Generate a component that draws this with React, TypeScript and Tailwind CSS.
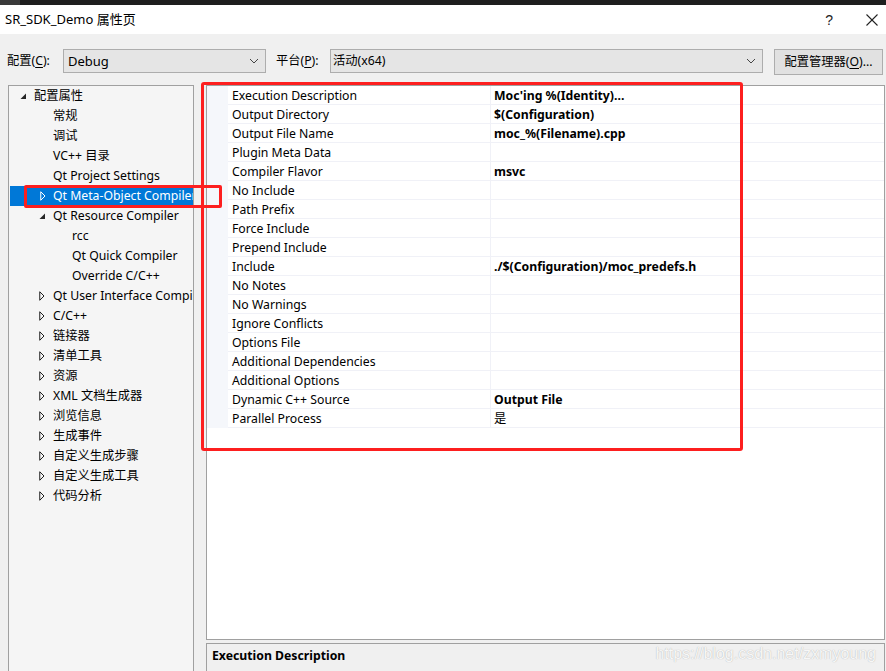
import React from "react";

type TreeItem = { label: string; level: number; arrow?: "open" | "closed"; selected?: boolean };

const tree: TreeItem[] = [
  { label: "配置属性", level: 0, arrow: "open" },
  { label: "常规", level: 1 },
  { label: "调试", level: 1 },
  { label: "VC++ 目录", level: 1 },
  { label: "Qt Project Settings", level: 1 },
  { label: "Qt Meta-Object Compiler", level: 1, arrow: "closed", selected: true },
  { label: "Qt Resource Compiler", level: 1, arrow: "open" },
  { label: "rcc", level: 2 },
  { label: "Qt Quick Compiler", level: 2 },
  { label: "Override C/C++", level: 2 },
  { label: "Qt User Interface Compiler", level: 1, arrow: "closed" },
  { label: "C/C++", level: 1, arrow: "closed" },
  { label: "链接器", level: 1, arrow: "closed" },
  { label: "清单工具", level: 1, arrow: "closed" },
  { label: "资源", level: 1, arrow: "closed" },
  { label: "XML 文档生成器", level: 1, arrow: "closed" },
  { label: "浏览信息", level: 1, arrow: "closed" },
  { label: "生成事件", level: 1, arrow: "closed" },
  { label: "自定义生成步骤", level: 1, arrow: "closed" },
  { label: "自定义生成工具", level: 1, arrow: "closed" },
  { label: "代码分析", level: 1, arrow: "closed" },
];

const rows: [string, string][] = [
  ["Execution Description", "Moc'ing %(Identity)..."],
  ["Output Directory", "$(Configuration)"],
  ["Output File Name", "moc_%(Filename).cpp"],
  ["Plugin Meta Data", ""],
  ["Compiler Flavor", "msvc"],
  ["No Include", ""],
  ["Path Prefix", ""],
  ["Force Include", ""],
  ["Prepend Include", ""],
  ["Include", "./$(Configuration)/moc_predefs.h"],
  ["No Notes", ""],
  ["No Warnings", ""],
  ["Ignore Conflicts", ""],
  ["Options File", ""],
  ["Additional Dependencies", ""],
  ["Additional Options", ""],
  ["Dynamic C++ Source", "Output File"],
  ["Parallel Process", "是"],
];

const levelPad = ["pl-[10px]", "pl-[29px]", "pl-[48px]"];

function Arrow({ kind, selected }: { kind?: "open" | "closed"; selected?: boolean }) {
  return (
    <span className="w-[15px] h-[20px] flex items-center shrink-0">
      {kind === "open" && (
        <svg width="7" height="7" viewBox="0 0 7 7" className="ml-[1px] mt-[1px]">
          <polygon points="6,0.5 6,6 0.5,6" fill="#262626" />
        </svg>
      )}
      {kind === "closed" && (
        <svg width="6" height="10" viewBox="0 0 6 10" className="ml-[1px]">
          <polygon
            points="0.75,0.75 5,5 0.75,9.25"
            fill="none"
            stroke={selected ? "#ffffff" : "#1e1e1e"}
            strokeWidth="1"
          />
        </svg>
      )}
    </span>
  );
}

function Chevron() {
  return (
    <svg width="10" height="6" viewBox="0 0 10 6">
      <polyline points="1,1 5,5 9,1" fill="none" stroke="#444" strokeWidth="1" />
    </svg>
  );
}

export default function App() {
  return (
    <div className="relative w-[886px] h-[671px] overflow-hidden bg-[#f0f0f0] flex flex-col font-['Noto_Sans','Noto_Sans_CJK_SC',sans-serif] text-[12.25px] text-black leading-none">
      {/* top dark strip */}
      <div className="h-[5px] bg-[#1e1e1e] shrink-0 flex">
        <div className="w-[20px] bg-[#3a3a3a]" />
      </div>

      {/* title bar */}
      <div className="h-[29px] bg-white shrink-0 flex items-center">
        <span className="ml-[5px] text-[13px]">SR_SDK_Demo 属性页</span>
        <span className="ml-auto text-[14px] text-[#222] mr-[33px] font-['Liberation_Sans',sans-serif]">?</span>
        <svg width="12" height="12" viewBox="0 0 12 12" className="mr-[8px]">
          <line x1="0.5" y1="0.5" x2="11.5" y2="11.5" stroke="#222" strokeWidth="1.1" />
          <line x1="11.5" y1="0.5" x2="0.5" y2="11.5" stroke="#222" strokeWidth="1.1" />
        </svg>
      </div>

      {/* toolbar */}
      <div className="h-[51px] shrink-0 flex items-start pt-[15px]">
        <span className="ml-[7px] w-[56px] h-[24px] flex items-center">
          配置(<span className="underline underline-offset-2">C</span>):
        </span>
        <div className="w-[203px] h-[24px] bg-[#e5e5e5] border border-[#adadad] flex items-center pl-[4px] pr-[6px]">
          <span className="text-[13px]">Debug</span>
          <span className="ml-auto flex"><Chevron /></span>
        </div>
        <span className="ml-[10px] w-[54px] h-[24px] flex items-center">
          平台(<span className="underline underline-offset-2">P</span>):
        </span>
        <div className="w-[433px] h-[24px] bg-[#e5e5e5] border border-[#adadad] flex items-center pl-[2px] pr-[6px]">
          <span>活动(x64)</span>
          <span className="ml-auto flex"><Chevron /></span>
        </div>
        <div className="ml-[11px] w-[109px] h-[26px] bg-[#e1e1e1] border border-[#adadad] flex items-center justify-center">
          配置管理器(<span className="underline underline-offset-2">O</span>)...
        </div>
      </div>

      {/* main */}
      <div className="flex-1 min-h-0 flex pl-[8px] gap-[12px]">
        {/* tree */}
        <div className="w-[186px] h-[600px] border border-[#a0a0a0] bg-[#f5f5f5] shrink-0 overflow-hidden">
          {tree.map((t, i) => (
            <div
              key={i}
              className={`h-[20px] flex items-center whitespace-nowrap overflow-hidden ${levelPad[t.level]} ${
                t.selected ? "bg-[#0078d7] text-white ml-[1px]" : ""
              }`}
            >
              <Arrow kind={t.arrow} selected={t.selected} />
              <span className={`pt-[1px] ${t.selected ? "-ml-[1px]" : ""}`}>{t.label}</span>
            </div>
          ))}
        </div>

        {/* right side */}
        <div className="w-[679px] shrink-0 flex flex-col gap-[3px]">
          <div className="h-[555px] border border-[#a0a0a0] bg-white shrink-0 overflow-hidden">
            {rows.map(([name, value], i) => (
              <div key={i} className="h-[19px] flex">
                <div className="w-[21px] bg-[#f5f7fb] shrink-0" />
                <div className="w-[263px] shrink-0 border-b border-r border-[#f0f1f7] flex items-center pl-[4px] pt-[2px]">
                  {name}
                </div>
                <div className="flex-1 border-b border-[#f0f1f7] flex items-center pl-[3px] pt-[2px] font-bold">
                  {value === "是" ? <span className="font-normal">{value}</span> : value}
                </div>
              </div>
            ))}
          </div>
          <div className="flex-1 border-t border-l border-r border-[#a0a0a0] bg-[#f0f0f0] pl-[5px] pt-[6px]">
            <span className="font-bold">Execution Description</span>
          </div>
        </div>
      </div>

      {/* annotations */}
      <div className="absolute left-[24px] top-[185px] w-[198px] h-[23px] border-[3px] border-[#fd1f1f] rounded-[2px] pointer-events-none" />
      <div className="absolute left-[201px] top-[82px] w-[542px] h-[369px] border-[3px] border-[#fd1f1f] rounded-[3px] pointer-events-none" />

      {/* watermark */}
      <div className="absolute right-[10px] top-[646px] text-[16px] font-['Liberation_Sans',sans-serif] text-[#f7f7f7] [text-shadow:0_0_1px_#a8a8a8] pointer-events-none">
        https://blog.csdn.net/zxmyoung
      </div>
    </div>
  );
}
